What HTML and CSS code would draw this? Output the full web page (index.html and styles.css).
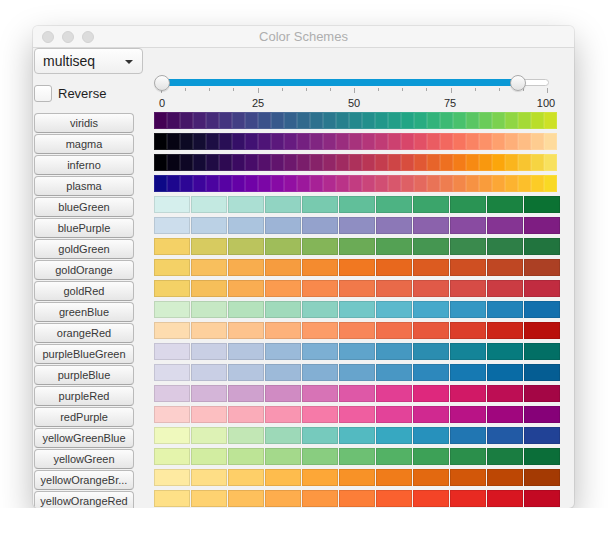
FILE: index.html
```html
<!DOCTYPE html>
<html lang="en">
<head>
<meta charset="utf-8">
<title>Color Schemes</title>
<link rel="stylesheet" href="styles.css">
</head>
<body>
<div class="window">
  <div class="titlebar">
    <div class="lights"><span class="light"></span><span class="light"></span><span class="light"></span></div>
    <div class="title">Color Schemes</div>
    <div></div>
  </div>
  <div class="content">
    <div class="top">
      <div class="controls">
        <div class="select"><span>multiseq</span><svg class="caret" width="8" height="4" viewBox="0 0 8 4"><path d="M0 0H8L4 4Z" fill="#333"/></svg></div>
        <div class="check"><span class="box"></span><span>Reverse</span></div>
      </div>
      <div class="slider">
        <div class="rail">
          <div class="track"></div>
          <div class="fill"></div>
          <div class="thumb lo"></div>
          <div class="thumb hi"></div>
        </div>
        <div class="ticks"><i class="major"></i><i></i><i></i><i></i><i class="major"></i><i></i><i></i><i></i><i class="major"></i><i></i><i></i><i></i><i class="major"></i><i></i><i></i><i></i><i class="major"></i></div>
        <div class="labels"><span>0</span><span>25</span><span>50</span><span>75</span><span>100</span></div>
      </div>
    </div>
    <div class="rows">
      <div class="row"><button class="btn">viridis</button><div class="swatches fine" data-scheme="viridis"></div></div>
      <div class="row"><button class="btn">magma</button><div class="swatches fine" data-scheme="magma"></div></div>
      <div class="row"><button class="btn">inferno</button><div class="swatches fine" data-scheme="inferno"></div></div>
      <div class="row"><button class="btn">plasma</button><div class="swatches fine" data-scheme="plasma"></div></div>
      <div class="row"><button class="btn">blueGreen</button><div class="swatches coarse" data-scheme="blueGreen"></div></div>
      <div class="row"><button class="btn">bluePurple</button><div class="swatches coarse" data-scheme="bluePurple"></div></div>
      <div class="row"><button class="btn">goldGreen</button><div class="swatches coarse" data-scheme="goldGreen"></div></div>
      <div class="row"><button class="btn">goldOrange</button><div class="swatches coarse" data-scheme="goldOrange"></div></div>
      <div class="row"><button class="btn">goldRed</button><div class="swatches coarse" data-scheme="goldRed"></div></div>
      <div class="row"><button class="btn">greenBlue</button><div class="swatches coarse" data-scheme="greenBlue"></div></div>
      <div class="row"><button class="btn">orangeRed</button><div class="swatches coarse" data-scheme="orangeRed"></div></div>
      <div class="row"><button class="btn">purpleBlueGreen</button><div class="swatches coarse" data-scheme="purpleBlueGreen"></div></div>
      <div class="row"><button class="btn">purpleBlue</button><div class="swatches coarse" data-scheme="purpleBlue"></div></div>
      <div class="row"><button class="btn">purpleRed</button><div class="swatches coarse" data-scheme="purpleRed"></div></div>
      <div class="row"><button class="btn">redPurple</button><div class="swatches coarse" data-scheme="redPurple"></div></div>
      <div class="row"><button class="btn">yellowGreenBlue</button><div class="swatches coarse" data-scheme="yellowGreenBlue"></div></div>
      <div class="row"><button class="btn">yellowGreen</button><div class="swatches coarse" data-scheme="yellowGreen"></div></div>
      <div class="row"><button class="btn">yellowOrangeBr...</button><div class="swatches coarse" data-scheme="yellowOrangeBrown"></div></div>
      <div class="row"><button class="btn">yellowOrangeRed</button><div class="swatches coarse" data-scheme="yellowOrangeRed"></div></div>
    </div>
  </div>
</div>
<script src="script.js"></script>
</body>
</html>
```

FILE: styles.css
```css
html, body {
  margin: 0;
  padding: 0;
  background: #ffffff;
  font-family: "Liberation Sans", Arial, sans-serif;
}

.window {
  margin: 26px 0 0 33px;
  width: 541px;
  height: 482px;
  border-radius: 5px;
  overflow: hidden;
  background: #f2f2f2;
  box-shadow: 0 0 0 1px rgba(0, 0, 0, 0.07), 0 14px 34px rgba(0, 0, 0, 0.28);
}

.titlebar {
  height: 21px;
  border-bottom: 1px solid #dadada;
  background: #f6f6f6;
  display: grid;
  grid-template-columns: 1fr auto 1fr;
  align-items: center;
}

.lights {
  display: flex;
  gap: 8px;
  padding-left: 9px;
}

.light {
  width: 12px;
  height: 12px;
  box-sizing: border-box;
  border-radius: 50%;
  background: #dcdcdc;
  border: 1px solid #d2d2d2;
}

.title {
  font-size: 13px;
  color: #aeaeae;
  line-height: 21px;
}

.content {
  padding-left: 1px;
}

.top {
  display: grid;
  grid-template-columns: 120px 403px;
  height: 64px;
}

.select {
  width: 109px;
  height: 26px;
  box-sizing: border-box;
  border: 1px solid #c4c4c4;
  border-radius: 4px;
  background: linear-gradient(#fefefe, #f0f0f0);
  display: flex;
  align-items: center;
  justify-content: space-between;
  padding: 0 9px 0 8px;
  font-size: 14px;
  color: #1e1e1e;
}

.caret {
  display: block;
  margin-top: 1px;
}

.check {
  margin-top: 11px;
  display: flex;
  align-items: center;
  gap: 6px;
  font-size: 13px;
  color: #1e1e1e;
}

.box {
  width: 18px;
  height: 17px;
  box-sizing: border-box;
  border: 1px solid #b8b8b8;
  border-radius: 3px;
  background: linear-gradient(#ffffff, #f3f3f3);
}

.slider {
  padding-top: 27px;
}

.rail {
  position: relative;
  height: 13px;
}

.track {
  position: absolute;
  left: 5px;
  right: 8px;
  top: 4px;
  height: 7px;
  box-sizing: border-box;
  border: 1px solid #c8c8c8;
  border-radius: 4px;
  background: #ffffff;
}

.fill {
  position: absolute;
  left: 5px;
  width: 359px;
  top: 4px;
  height: 7px;
  border-radius: 4px 0 0 4px;
  background: #0b99d6;
}

.thumb {
  position: absolute;
  top: 0;
  width: 16px;
  height: 16px;
  box-sizing: border-box;
  border-radius: 50%;
  border: 1px solid #aaaaaa;
  background: linear-gradient(#fdfdfd, #e2e2e2);
  box-shadow: 0 1px 1px rgba(0, 0, 0, 0.12);
}

.thumb.lo { left: 0; }
.thumb.hi { left: 356px; }

.ticks {
  display: flex;
  justify-content: space-between;
  align-items: flex-start;
  height: 5px;
  margin: 0 9px 0 7px;
}

.ticks i {
  display: block;
  width: 1px;
  height: 3px;
  background: #a8a8a8;
}

.ticks i.major {
  height: 5px;
}

.labels {
  display: flex;
  justify-content: space-between;
  margin: 3px -4px 0 -7px;
  font-size: 11px;
  line-height: 14px;
  color: #2a2a2a;
}

.labels span {
  width: 30px;
  text-align: center;
}

.rows {
  display: flex;
  flex-direction: column;
}

.row {
  display: flex;
  align-items: flex-start;
  gap: 20px;
  height: 21px;
  flex: none;
}

.btn {
  width: 100px;
  height: 20px;
  margin: 1px 0 0 0;
  padding: 0;
  box-sizing: border-box;
  border: 1px solid #bababa;
  border-bottom-color: #a6a6a6;
  border-radius: 4px;
  background: linear-gradient(#fcfcfc, #e6e6e6);
  font-family: "Liberation Sans", Arial, sans-serif;
  font-size: 11px;
  color: #383838;
  line-height: 18px;
  white-space: nowrap;
  overflow: hidden;
}

.swatches {
  display: flex;
  height: 17px;
}

.cell {
  flex: none;
  height: 17px;
  box-sizing: border-box;
  border: 1px solid transparent;
}

.fine .cell {
  width: 13px;
}

.coarse .cell {
  width: 36px;
  margin-right: 1px;
}
```

FILE: script.js
```js
var continuous = {
  viridis: ['440154','482475','414487','355f8d','2a788e','21918c','22a884','44bf70','7ad151','bddf26','fde725'],
  magma: ['000004','140e36','3b0f70','641a80','8c2981','b73779','de4968','f7705c','fe9f6d','fecf92','fcfdbf'],
  inferno: ['000004','160b39','420a68','6a176e','932667','bc3754','dd513a','f37819','fca50a','f6d746','fcffa4'],
  plasma: ['0d0887','41049d','6a00a8','8f0da4','b12a90','cc4778','e16462','f2844b','fca636','fcce25','f0f921']
};
var discrete = {
  blueGreen: 'd5efedc1e8e0a7ddd18bd2be70c6a958ba9144ad77319c5d2089460e7736036429',
  bluePurple: 'ccddecbad0e4a8c2dd9ab0d4919cc98d85be8b6db28a55a6873c99822287730f71',
  goldGreen: 'f4d166d5ca60b6c35c98bb597cb25760a6564b9c533f8f4f33834a257740146c36',
  goldOrange: 'f4d166f8be5cf8aa4cf5983bf3852aef701be2621fd65322c54923b142239e3a26',
  goldRed: 'f4d166f6be59f9aa51fc964ef6834bee734ae56249db5247cf4244c43141b71d3e',
  greenBlue: 'd3eecec5e8c3b1e1bb9bd8bb82cec269c2ca51b2cd3c9fc7288abd1675b10b60a1',
  orangeRed: 'fddcaffdcf9bfdc18afdad77fb9562f67d53ee6545e24932d32d1ebf130da70403',
  purpleBlueGreen: 'dbd8eac8cee4b0c3de93b7d872acd1549fc83892bb1c88a3097f8702736b016353',
  purpleBlue: 'dbdaebc8cee4b1c3de97b7d87bacd15b9fc93a90c01e7fb70b70ab056199045281',
  purpleRed: 'dcc9e2d3b3d7ce9eccd186c0da6bb2e14da0e23189d91e6fc61159ab07498f023a',
  redPurple: 'fccfccfcbec0faa9b8f98faff571a5ec539ddb3695c41b8aa908808d0179700174',
  yellowGreenBlue: 'eff9bddbf1b4bde5b594d5b969c5be45b4c22c9ec02182b82163aa23479c1c3185',
  yellowGreen: 'e4f4acd1eca0b9e2949ed68880c97c62bb6e47aa5e3297502083440e723b036034',
  yellowOrangeBrown: 'feeaa1fedd84fecc63feb746fca031f68921eb7215db5e0bc54c05ab3d038f3204',
  yellowOrangeRed: 'fee087fed16ffebd59fea849fd903efc7335f9522bee3423de1b20ca0b22af0225'
};

function toRgb(h) {
  return [parseInt(h.slice(0, 2), 16), parseInt(h.slice(2, 4), 16), parseInt(h.slice(4, 6), 16)];
}

function colorsOf(name) {
  if (continuous[name]) return continuous[name].map(toRgb);
  return discrete[name].match(/.{6}/g).map(toRgb);
}

function interp(cols, t) {
  var n = cols.length - 1;
  var x = t * n;
  var i = Math.min(Math.floor(x), n - 1);
  var f = x - i;
  return cols[i].map(function (c, k) { return Math.round(c + (cols[i + 1][k] - c) * f); });
}

var RANGE = 0.925;

document.querySelectorAll('.swatches').forEach(function (el) {
  var cols = colorsOf(el.dataset.scheme);
  var fine = el.classList.contains('fine');
  var n = fine ? 31 : 11;
  for (var i = 0; i < n; i++) {
    var c = interp(cols, (i / (n - 1)) * RANGE);
    var b;
    if (fine) {
      b = c.map(function (v) { return Math.round(v + (255 - v) * 0.1); });
    } else {
      b = c.map(function (v) { return Math.round(v * 0.9); });
    }
    var d = document.createElement('div');
    d.className = 'cell';
    d.style.backgroundColor = 'rgb(' + c.join(',') + ')';
    d.style.borderColor = 'rgb(' + b.join(',') + ')';
    el.appendChild(d);
  }
});
```
